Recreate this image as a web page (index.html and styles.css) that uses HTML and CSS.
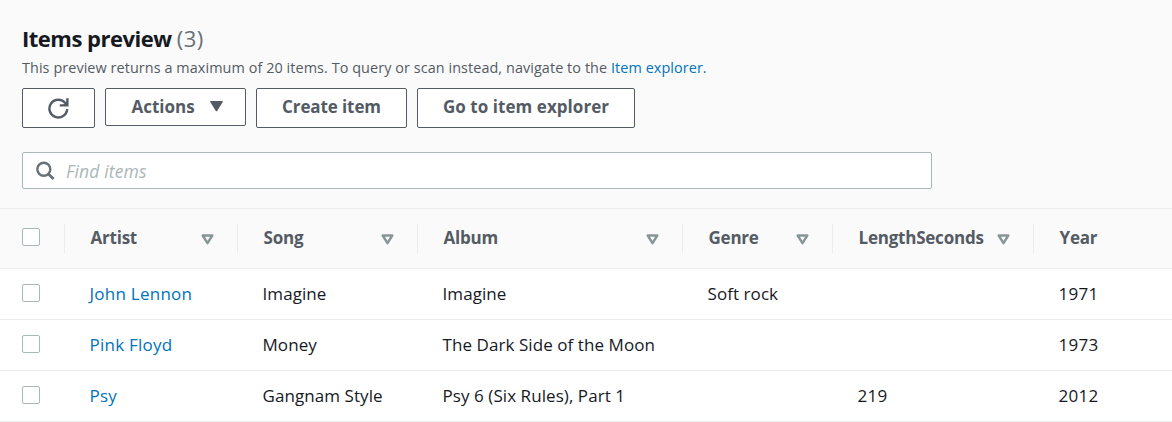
FILE: index.html
```html
<!DOCTYPE html>
<html lang="en">
<head>
<meta charset="utf-8">
<title>Items preview</title>
<link rel="stylesheet" href="styles.css">
</head>
<body>
<svg width="0" height="0" class="defs">
  <symbol id="sort" viewBox="0 0 13 11"><path d="M1.7 1.5h9.6L6.5 9.2z" fill="none" stroke="currentColor" stroke-width="2.4" stroke-linejoin="round"/></symbol>
</svg>
<header class="panel">
  <h2 class="title">Items preview <span class="count">(3)</span></h2>
  <p class="description">This preview returns a maximum of 20 items. To query or scan instead, navigate to the <a class="link" href="#">Item explorer.</a></p>
  <div class="actions">
    <button class="btn btn-refresh" aria-label="Refresh"><svg width="22" height="22" viewBox="0 0 22 22"><path d="M20.2 12.2A8.9 8.9 0 1 1 18.4 6.2M20.4 1.2v7.2h-7.6" fill="none" stroke="currentColor" stroke-width="2.4"/><path d="M15.5 8.4l4.9-4.4v4.4z" fill="currentColor"/></svg></button>
    <button class="btn btn-menu"><span>Actions</span><svg width="13" height="11" viewBox="0 0 13 11"><path d="M.7 0h11.6q.9.1.4 1L7.2 9.9q-.7.9-1.4 0L.3 1Q-.2.1.7 0z" fill="currentColor"/></svg></button>
    <button class="btn btn-create">Create item</button>
    <button class="btn btn-explorer">Go to item explorer</button>
  </div>
  <label class="search">
    <svg width="20" height="20" viewBox="0 0 20 20"><circle cx="7.8" cy="8.3" r="6.5" fill="none" stroke="currentColor" stroke-width="2.4"/><path d="M12.4 12.9l5.2 5.2" stroke="currentColor" stroke-width="2.8"/></svg>
    <input class="search-input" type="text" placeholder="Find items">
  </label>
</header>
<main class="table">
  <div class="row head">
    <div class="cell check"><i class="box"></i></div>
    <div class="cell"><span>Artist</span><svg class="sort"><use href="#sort"/></svg></div>
    <div class="cell"><span>Song</span><svg class="sort"><use href="#sort"/></svg></div>
    <div class="cell"><span>Album</span><svg class="sort"><use href="#sort"/></svg></div>
    <div class="cell"><span>Genre</span><svg class="sort"><use href="#sort"/></svg></div>
    <div class="cell"><span>LengthSeconds</span><svg class="sort"><use href="#sort"/></svg></div>
    <div class="cell"><span>Year</span></div>
  </div>
  <div class="row">
    <div class="cell check"><i class="box"></i></div>
    <div class="cell"><a class="link artist" href="#">John Lennon</a></div>
    <div class="cell">Imagine</div>
    <div class="cell">Imagine</div>
    <div class="cell">Soft rock</div>
    <div class="cell"></div>
    <div class="cell num">1971</div>
  </div>
  <div class="row">
    <div class="cell check"><i class="box"></i></div>
    <div class="cell"><a class="link artist" href="#">Pink Floyd</a></div>
    <div class="cell">Money</div>
    <div class="cell">The Dark Side of the Moon</div>
    <div class="cell"></div>
    <div class="cell"></div>
    <div class="cell num">1973</div>
  </div>
  <div class="row">
    <div class="cell check"><i class="box"></i></div>
    <div class="cell"><a class="link artist" href="#">Psy</a></div>
    <div class="cell">Gangnam Style</div>
    <div class="cell">Psy 6 (Six Rules), Part 1</div>
    <div class="cell"></div>
    <div class="cell num">219</div>
    <div class="cell num">2012</div>
  </div>
</main>
</body>
</html>
```
FILE: styles.css
```css
* { box-sizing: border-box; }
body {
  margin: 0;
  height: 422px;
  overflow: hidden;
  background: #fff;
  color: #16191f;
  font-family: "Open Sans", sans-serif;
  font-size: 17px;
}
.defs { display: block; }
.link { color: #0073bb; text-decoration: none; }

.panel {
  height: 208px;
  padding: 23px 22px 0;
  background: #fafafa;
}
.title {
  margin: 0;
  font-size: 22px;
  line-height: 30px;
  font-weight: 700;
  letter-spacing: -0.5px;
}
.count {
  color: #687078;
  font-weight: 400;
  letter-spacing: 0.4px;
}
.description {
  margin: 5px 0 0;
  font-size: 14.4px;
  line-height: 20px;
  letter-spacing: 0.08px;
  color: #545b64;
  white-space: nowrap;
}
.actions {
  display: flex;
  align-items: flex-start;
  gap: 10px;
  margin-top: 10px;
}
.btn {
  display: flex;
  align-items: center;
  justify-content: center;
  height: 40px;
  padding: 0 0 3px;
  border: 1px solid #545b64;
  border-radius: 2px;
  background: #fff;
  color: #545b64;
  font: 700 17px "Open Sans", sans-serif;
  white-space: nowrap;
}
.btn-refresh { width: 73px; padding: 0 1px 1px 0; }
.btn-menu { width: 141px; height: 38px; gap: 15px; padding: 0 0 2px 3px; }
.btn-create { width: 151px; letter-spacing: -0.1px; }
.btn-explorer { width: 218px; letter-spacing: 0.05px; }
.search {
  display: flex;
  align-items: center;
  width: 910px;
  height: 37px;
  margin-top: 24px;
  padding-left: 13px;
  border: 1px solid #aab7b8;
  border-radius: 2px;
  background: #fff;
  color: #687078;
}
.search-input {
  flex: 1;
  margin-left: 10px;
  padding: 0;
  border: 0;
  outline: 0;
  background: none;
  font: 17.5px "Open Sans", sans-serif;
  letter-spacing: 0.15px;
}
.search-input::placeholder { color: #aab7b8; font-style: italic; }

.row {
  display: grid;
  grid-template-columns: 64px 173px 180px 265px 150px 201px 1fr;
  height: 51px;
  align-items: center;
  padding-bottom: 2px;
  border-bottom: 1px solid #eaeded;
}
.cell {
  display: flex;
  align-items: center;
  padding-left: 25.5px;
  letter-spacing: 0.07px;
  white-space: nowrap;
}
.artist, .num { letter-spacing: 0.25px; }
.check { padding-left: 22px; }
.box {
  width: 18px;
  height: 18px;
  border: 1px solid #aab7b8;
  border-radius: 2px;
  background: #fff;
}
.head {
  height: 61px;
  padding-bottom: 1px;
  border-top: 1px solid #eaeded;
  background: #fafafa;
  color: #545b64;
  font-weight: 700;
}
.head .cell {
  height: 29px;
  justify-content: space-between;
  padding-right: 23.5px;
  padding-bottom: 1px;
  border-left: 1px solid #eaeded;
  letter-spacing: -0.22px;
}
.head .check { border-left: 0; padding-bottom: 2px; }
.sort { width: 13px; height: 11px; margin-top: 3px; color: #879596; }
```
